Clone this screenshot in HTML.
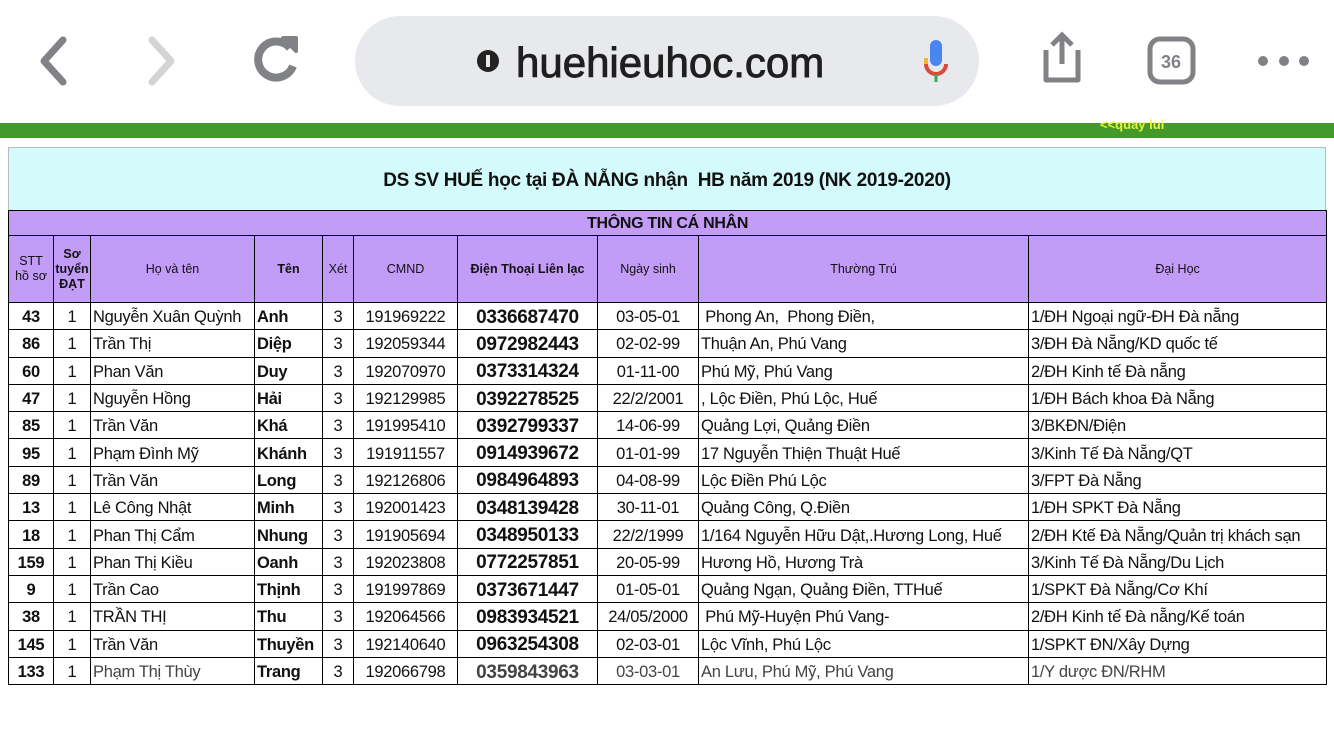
<!DOCTYPE html>
<html><head><meta charset="utf-8"><style>
*{margin:0;padding:0;box-sizing:border-box}
body{width:1334px;height:750px;background:#fff;font-family:"Liberation Sans",Arial,sans-serif;position:relative;overflow:hidden}
.url{position:absolute;left:355px;top:16px;width:624px;height:90px;border-radius:45px;background:#e8e9ec}
.green{position:absolute;left:0;top:123px;width:1334px;height:15px;background:#439a2a}
.ql{position:absolute;left:1100px;top:117px;font-size:13px;font-weight:bold;color:#e8f23a}
.title{position:absolute;left:8px;top:147px;width:1318px;height:64px;background:#d3fbfc;border:1px solid #bbb;text-align:center;font-weight:bold;font-size:19px;letter-spacing:-0.3px;line-height:66px;color:#111}
table{position:absolute;left:8px;top:210px;border-collapse:collapse;table-layout:fixed;width:1318px}
td{border:1px solid #000;font-size:16.5px;letter-spacing:-0.3px;white-space:nowrap;overflow:hidden;height:27.3px;padding:3px 2px 0;color:#111}
.h td{background:#c39cf7;font-size:12.5px;text-align:center;letter-spacing:0;height:67px;line-height:15px;padding:0 2px}
.p td{background:#c39cf7;font-weight:bold;font-size:16px;text-align:center;height:25px;padding:2px 0 0}
.c{text-align:center}.b{font-weight:bold}.ph{font-weight:bold;font-size:19px;text-align:center}
</style></head><body>
<svg style="position:absolute;left:0;top:0" width="1334" height="120">
<path d="M63 40 L44 61 L63 82" fill="none" stroke="#808285" stroke-width="7" stroke-linecap="round" stroke-linejoin="round"/>
<path d="M152 40 L171 61 L152 82" fill="none" stroke="#d4d4d4" stroke-width="7" stroke-linecap="round" stroke-linejoin="round"/>
<path d="M290 48 A18 18 0 1 0 293 66" fill="none" stroke="#808285" stroke-width="8"/>
<path d="M283 38 L296 38 L296 51 Z" fill="#808285" stroke="#808285" stroke-width="4" stroke-linejoin="round"/>
<path d="M1046 50 L1046 80 L1078 80 L1078 50" fill="none" stroke="#808285" stroke-width="5" stroke-linejoin="round"/>
<path d="M1062 36 L1062 64 M1052 45 L1062 35 L1072 45" fill="none" stroke="#808285" stroke-width="5"/>
<rect x="1150" y="39" width="43" height="43" rx="10" fill="none" stroke="#808285" stroke-width="5"/>
<text x="1171" y="68" font-size="18" font-weight="bold" fill="#808285" text-anchor="middle" font-family="Liberation Sans">36</text>
<circle cx="1263" cy="61" r="5" fill="#808285"/><circle cx="1284" cy="61" r="5" fill="#808285"/><circle cx="1304" cy="61" r="5" fill="#808285"/>
</svg>
<div class="url"></div>
<svg style="position:absolute;left:0;top:0" width="1334" height="120">
<circle cx="488" cy="61" r="11" fill="#222"/><rect x="486" y="55" width="4" height="12" fill="#e8e9ec"/>
<text x="516" y="77" font-size="42" fill="#1f1f1f" stroke="#1f1f1f" stroke-width="0.9" font-family="Liberation Sans">huehieuhoc.com</text>
<rect x="930" y="40" width="12" height="26" rx="6" fill="#4a86f0"/>
<path d="M926 64 A10 10 0 0 0 946 64" fill="none" stroke="#dd4a3c" stroke-width="4"/>
<path d="M926 58 L926 64" stroke="#f3b82a" stroke-width="4"/>
<path d="M936 74 L936 82" stroke="#3aa857" stroke-width="3"/>
</svg>
<div class="green"></div><div class="ql">&lt;&lt;quay lui</div>
<div class="title">DS SV HUẾ học tại ĐÀ NẴNG nhận&nbsp; HB năm 2019 (NK 2019-2020)</div>
<table>
<colgroup><col style="width:45px"><col style="width:37px"><col style="width:164px"><col style="width:68px"><col style="width:31px"><col style="width:104px"><col style="width:140px"><col style="width:101px"><col style="width:330px"><col style="width:298px"></colgroup>
<tr class="p"><td colspan="10">THÔNG TIN CÁ NHÂN</td></tr>
<tr class="h"><td>STT<br>hồ sơ</td><td style="font-weight:bold;padding:0">Sơ<br>tuyển<br>ĐẠT</td><td>Họ và tên</td><td class="b">Tên</td><td>Xét</td><td>CMND</td><td class="b">Điện Thoại Liên lạc</td><td>Ngày sinh</td><td>Thường Trú</td><td>Đại Học</td></tr>
<tr><td class="c b">43</td><td class="c">1</td><td>Nguyễn Xuân Quỳnh</td><td class="b">Anh</td><td class="c">3</td><td class="c">191969222</td><td class="ph">0336687470</td><td class="c">03-05-01</td><td>&nbsp;Phong An,&nbsp; Phong Điền,</td><td>1/ĐH Ngoại ngữ-ĐH Đà nẵng</td></tr>
<tr><td class="c b">86</td><td class="c">1</td><td>Trần Thị</td><td class="b">Diệp</td><td class="c">3</td><td class="c">192059344</td><td class="ph">0972982443</td><td class="c">02-02-99</td><td>Thuận An, Phú Vang</td><td>3/ĐH Đà Nẵng/KD quốc tế</td></tr>
<tr><td class="c b">60</td><td class="c">1</td><td>Phan Văn</td><td class="b">Duy</td><td class="c">3</td><td class="c">192070970</td><td class="ph">0373314324</td><td class="c">01-11-00</td><td>Phú Mỹ, Phú Vang</td><td>2/ĐH Kinh tế Đà nẵng</td></tr>
<tr><td class="c b">47</td><td class="c">1</td><td>Nguyễn Hồng</td><td class="b">Hải</td><td class="c">3</td><td class="c">192129985</td><td class="ph">0392278525</td><td class="c">22/2/2001</td><td>, Lộc Điền, Phú Lộc, Huế</td><td>1/ĐH Bách khoa Đà Nẵng</td></tr>
<tr><td class="c b">85</td><td class="c">1</td><td>Trần Văn</td><td class="b">Khá</td><td class="c">3</td><td class="c">191995410</td><td class="ph">0392799337</td><td class="c">14-06-99</td><td>Quảng Lợi, Quảng Điền</td><td>3/BKĐN/Điện</td></tr>
<tr><td class="c b">95</td><td class="c">1</td><td>Phạm Đình Mỹ</td><td class="b">Khánh</td><td class="c">3</td><td class="c">191911557</td><td class="ph">0914939672</td><td class="c">01-01-99</td><td>17 Nguyễn Thiện Thuật Huế</td><td>3/Kinh Tế Đà Nẵng/QT</td></tr>
<tr><td class="c b">89</td><td class="c">1</td><td>Trần Văn</td><td class="b">Long</td><td class="c">3</td><td class="c">192126806</td><td class="ph">0984964893</td><td class="c">04-08-99</td><td>Lộc Điền Phú Lộc</td><td>3/FPT Đà Nẵng</td></tr>
<tr><td class="c b">13</td><td class="c">1</td><td>Lê Công Nhật</td><td class="b">Minh</td><td class="c">3</td><td class="c">192001423</td><td class="ph">0348139428</td><td class="c">30-11-01</td><td>Quảng Công, Q.Điền</td><td>1/ĐH SPKT Đà Nẵng</td></tr>
<tr><td class="c b">18</td><td class="c">1</td><td>Phan Thị Cẩm</td><td class="b">Nhung</td><td class="c">3</td><td class="c">191905694</td><td class="ph">0348950133</td><td class="c">22/2/1999</td><td>1/164 Nguyễn Hữu Dật,.Hương Long, Huế</td><td>2/ĐH Ktế Đà Nẵng/Quản trị khách sạn</td></tr>
<tr><td class="c b">159</td><td class="c">1</td><td>Phan Thị Kiều</td><td class="b">Oanh</td><td class="c">3</td><td class="c">192023808</td><td class="ph">0772257851</td><td class="c">20-05-99</td><td>Hương Hồ, Hương Trà</td><td>3/Kinh Tế Đà Nẵng/Du Lịch</td></tr>
<tr><td class="c b">9</td><td class="c">1</td><td>Trần Cao</td><td class="b">Thịnh</td><td class="c">3</td><td class="c">191997869</td><td class="ph">0373671447</td><td class="c">01-05-01</td><td>Quảng Ngạn, Quảng Điền, TTHuế</td><td>1/SPKT Đà Nẵng/Cơ Khí</td></tr>
<tr><td class="c b">38</td><td class="c">1</td><td>TRẦN THỊ</td><td class="b">Thu</td><td class="c">3</td><td class="c">192064566</td><td class="ph">0983934521</td><td class="c">24/05/2000</td><td>&nbsp;Phú Mỹ-Huyện Phú Vang-</td><td>2/ĐH Kinh tế Đà nẵng/Kế toán</td></tr>
<tr><td class="c b">145</td><td class="c">1</td><td>Trần Văn</td><td class="b">Thuyền</td><td class="c">3</td><td class="c">192140640</td><td class="ph">0963254308</td><td class="c">02-03-01</td><td>Lộc Vĩnh, Phú Lộc</td><td>1/SPKT ĐN/Xây Dựng</td></tr>
<tr style="color:#444"><td class="c b">133</td><td class="c">1</td><td style="color:#444">Phạm Thị Thùy</td><td class="b">Trang</td><td class="c">3</td><td class="c">192066798</td><td class="ph" style="color:#444">0359843963</td><td class="c" style="color:#444">03-03-01</td><td style="color:#444">An Lưu, Phú Mỹ, Phú Vang</td><td style="color:#444">1/Y dược ĐN/RHM</td></tr>
</table>
</body></html>
